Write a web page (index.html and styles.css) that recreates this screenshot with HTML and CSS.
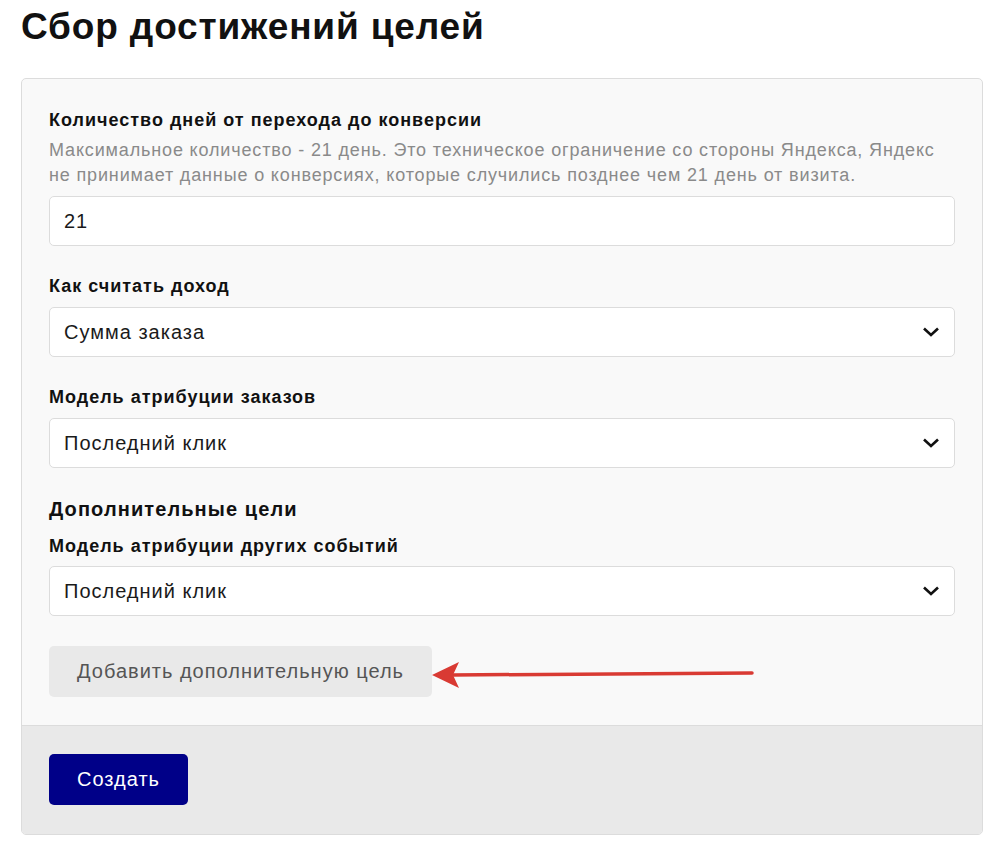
FILE: index.html
```html
<!DOCTYPE html>
<html lang="ru">
<head>
    <meta charset="UTF-8">
    <meta name="viewport" content="width=device-width, initial-scale=1.0">
    <title>Сбор достижений целей</title>
    <link rel="stylesheet" href="styles.css">
</head>
<body>
    <h1>Сбор достижений целей</h1>
    <form class="card">
        <div class="card-body">
            <div class="field">
                <label class="label" for="days">Количество дней от перехода до конверсии</label>
                <p class="hint">Максимальное количество - 21 день. Это техническое ограничение со стороны Яндекса, Яндекс не принимает данные о конверсиях, которые случились позднее чем 21 день от визита.</p>
                <input class="control" id="days" type="text" value="21">
            </div>
            <div class="field">
                <label class="label" for="income">Как считать доход</label>
                <div class="select-wrap">
                    <select class="control" id="income">
                        <option>Сумма заказа</option>
                    </select>
                    <svg class="chevron" width="18" height="12" viewBox="0 0 18 12"><path d="M2 2.5 L9 9 L16 2.5" fill="none" stroke="#111" stroke-width="2.6"/></svg>
                </div>
            </div>
            <div class="field">
                <label class="label" for="orders">Модель атрибуции заказов</label>
                <div class="select-wrap">
                    <select class="control" id="orders">
                        <option>Последний клик</option>
                    </select>
                    <svg class="chevron" width="18" height="12" viewBox="0 0 18 12"><path d="M2 2.5 L9 9 L16 2.5" fill="none" stroke="#111" stroke-width="2.6"/></svg>
                </div>
            </div>
            <div class="field field-last">
                <h2 class="subtitle">Дополнительные цели</h2>
                <label class="label label-tight" for="events">Модель атрибуции других событий</label>
                <div class="select-wrap">
                    <select class="control" id="events">
                        <option>Последний клик</option>
                    </select>
                    <svg class="chevron" width="18" height="12" viewBox="0 0 18 12"><path d="M2 2.5 L9 9 L16 2.5" fill="none" stroke="#111" stroke-width="2.6"/></svg>
                </div>
            </div>
            <div class="add-row">
                <button type="button" class="btn-add">Добавить дополнительную цель</button>
                <svg class="arrow" width="330" height="36" viewBox="0 0 330 36">
                    <line x1="20" y1="19" x2="320" y2="17" stroke="#d93a33" stroke-width="3.5" stroke-linecap="round"/>
                    <path d="M0 19 L27 6 L21 19 L27 32 Z" fill="#d93a33"/>
                </svg>
            </div>
        </div>
        <div class="card-footer">
            <button type="submit" class="btn-create">Создать</button>
        </div>
    </form>
</body>
</html>
```

FILE: styles.css
```css
body {
    font-family: "Liberation Sans", Arial, sans-serif;
    background-color: #fff;
    color: #111;
    margin: 0;
    padding: 0 25px 20px 21px;
}

h1 {
    font-size: 37px;
    font-weight: bold;
    letter-spacing: 0.85px;
    margin: 0;
    padding-top: 6px;
    line-height: 42px;
    height: 72px;
}

.card {
    border: 1px solid #dcdcdc;
    border-radius: 5px;
    background-color: #f9f9f9;
    overflow: hidden;
}

.card-body {
    padding: 28px 27px 28px 27px;
}

.field {
    margin-bottom: 27px;
}

.field-last {
    margin-bottom: 30px;
}

.label {
    display: block;
    font-size: 18px;
    font-weight: bold;
    letter-spacing: 1px;
    line-height: 26px;
    margin-bottom: 8px;
}

.label-tight {
    margin-bottom: 7px;
}

.hint {
    margin: -3px 0 8px;
    font-size: 18px;
    letter-spacing: 0.85px;
    line-height: 25px;
    color: #8a8a8a;
}

.subtitle {
    font-size: 20px;
    font-weight: bold;
    letter-spacing: 1.1px;
    line-height: 28px;
    margin: 0 0 10px;
}

.control {
    display: block;
    box-sizing: border-box;
    width: 100%;
    height: 50px;
    padding: 0 14px;
    border: 1px solid #dcdcdc;
    border-radius: 5px;
    background-color: #fff;
    font-family: inherit;
    font-size: 20px;
    letter-spacing: 1px;
    color: #1a1a1a;
    outline: none;
}

select.control {
    appearance: none;
    -webkit-appearance: none;
}

.select-wrap {
    position: relative;
}

.chevron {
    position: absolute;
    right: 15px;
    top: 19px;
    pointer-events: none;
}

.add-row {
    position: relative;
}

.btn-add {
    display: block;
    height: 51px;
    padding: 0 28px;
    border: none;
    border-radius: 5px;
    background-color: #e9e9e9;
    color: #555;
    font-family: inherit;
    font-size: 20px;
    letter-spacing: 1px;
    cursor: pointer;
}

.arrow {
    position: absolute;
    left: 383px;
    top: 10px;
}

.card-footer {
    border-top: 1px solid #dcdcdc;
    background-color: #e9e9e9;
    padding: 28px 27px 29px;
}

.btn-create {
    display: block;
    height: 51px;
    padding: 0 28px;
    border: none;
    border-radius: 5px;
    background-color: #000088;
    color: #fff;
    font-family: inherit;
    font-size: 20px;
    letter-spacing: 1px;
    cursor: pointer;
}
```
